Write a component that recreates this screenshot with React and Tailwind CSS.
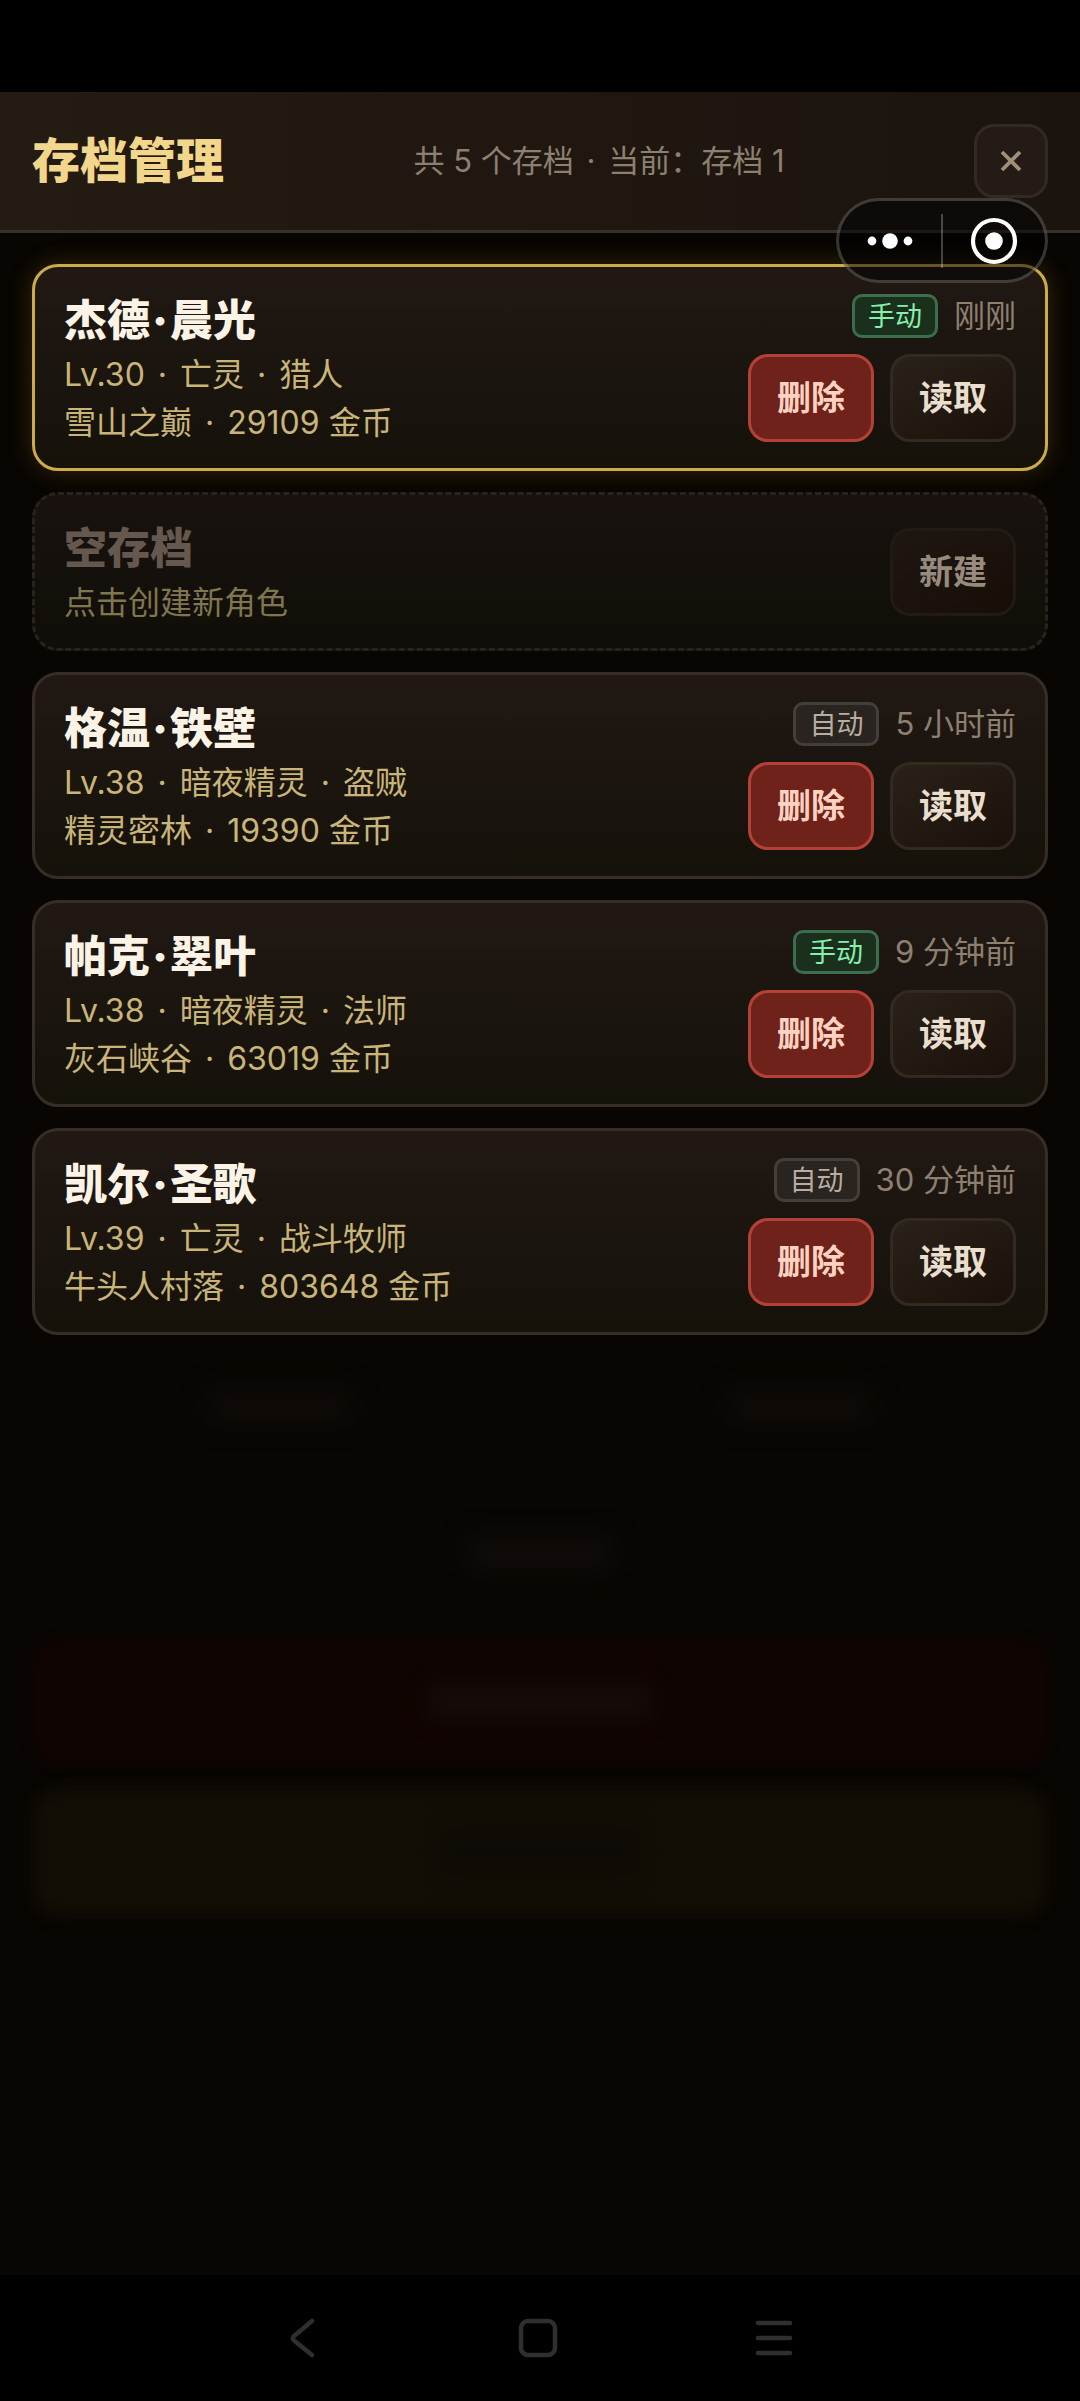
import React, { Fragment } from "react";

const saves = [
  { id: 1, name: "杰德·晨光", info: "Lv.30 · 亡灵 · 猎人", place: "雪山之巅 · 29109 金币", kind: "手动", time: "刚刚", current: true },
  { id: 2, empty: true, name: "空存档", info: "点击创建新角色" },
  { id: 3, name: "格温·铁壁", info: "Lv.38 · 暗夜精灵 · 盗贼", place: "精灵密林 · 19390 金币", kind: "自动", time: "5 小时前" },
  { id: 4, name: "帕克·翠叶", info: "Lv.38 · 暗夜精灵 · 法师", place: "灰石峡谷 · 63019 金币", kind: "手动", time: "9 分钟前" },
  { id: 5, name: "凯尔·圣歌", info: "Lv.39 · 亡灵 · 战斗牧师", place: "牛头人村落 · 803648 金币", kind: "自动", time: "30 分钟前" },
];

const cardBase = "flex items-center justify-between rounded-[26px] border-3 bg-linear-to-b px-[29px] pt-[22px] pb-[21px]";
const buttonBase = "h-[88px] w-[126px] rounded-[20px] border-3 text-[34px] font-bold leading-none";
const nameBase = "text-[43px] font-black leading-[62px]";
const metaBase = "text-[32px] leading-[48px]";

/* Sets each middle dot with a little room on both sides. */
function Dotted({ text, room = "mx-1" }) {
  return text.split("·").map((part, i) => (
    <Fragment key={i}>
      {i > 0 && <span className={room}>·</span>}
      {part}
    </Fragment>
  ));
}

function Badge({ kind }) {
  const tone =
    kind === "手动"
      ? "border-[#3a6e4d] bg-[#1b2f1d] text-[#86efac]"
      : "border-[#443e3a] bg-[#292420] text-[#b8ada0]";
  return (
    <span className={`flex h-11 items-center rounded-[10px] border-3 px-[13px] text-[27px] leading-none ${tone}`}>
      {kind}
    </span>
  );
}

function EmptyCard({ save }) {
  return (
    <li className={`${cardBase} border-dashed border-[#28231d] from-[#19120e] to-[#100e08]`}>
      <div>
        <h2 className={`${nameBase} text-[#65584e]`}>{save.name}</h2>
        <p className={`${metaBase} text-[#7f7650]`}>{save.info}</p>
      </div>
      <button type="button" className={`${buttonBase} border-[#221a14] bg-linear-to-br from-[#1f1612] to-[#160e07] text-[#978b7e]`}>
        新建
      </button>
    </li>
  );
}

function SaveCard({ save }) {
  const frame = save.current
    ? "border-[#cdab49] shadow-[0_0_26px_rgba(212,175,55,0.22)]"
    : "border-[#352d26]";
  return (
    <li className={`${cardBase} from-[#211813] to-[#15120a] ${frame}`}>
      <div>
        <h2 className={`${nameBase} text-[#fbf3e6]`}>
          <Dotted text={save.name} room="mx-0.5" />
        </h2>
        <p className={`${metaBase} text-[#c9b579]`}>
          <Dotted text={save.info} />
        </p>
        <p className={`${metaBase} text-[#c9b579]`}>
          <Dotted text={save.place} />
        </p>
      </div>
      <div className="flex flex-col items-end gap-4">
        <div className="flex items-center gap-4">
          <Badge kind={save.kind} />
          <time className="text-[31px] leading-[44px] text-[#8d8070]">{save.time}</time>
        </div>
        <div className="flex gap-4">
          <button type="button" className={`${buttonBase} border-[#b34138] bg-[#6f221a] text-[#ffd2c2]`}>
            删除
          </button>
          <button type="button" className={`${buttonBase} border-[#322921] bg-linear-to-br from-[#2a2119] to-[#1a120a] text-[#eadfcf]`}>
            读取
          </button>
        </div>
      </div>
    </li>
  );
}

/* Dimmed, blurred menu that lies behind the panel. */
function Backdrop() {
  return (
    <div aria-hidden="true" className="absolute inset-x-0 bottom-0 flex h-[931px] flex-col gap-6 px-8">
      <div className="grid grid-cols-2 gap-6">
        <div className="flex h-[124px] items-center justify-center">
          <div className="h-9 w-36 bg-[#0f0b08] blur-[12px]" />
        </div>
        <div className="flex h-[124px] items-center justify-center">
          <div className="h-9 w-36 bg-[#0f0b08] blur-[12px]" />
        </div>
      </div>
      <div className="flex h-[124px] items-center justify-center">
        <div className="h-9 w-36 bg-[#100c09] blur-[12px]" />
      </div>
      <div className="flex h-[124px] items-center justify-center rounded-[26px] bg-[#100402] blur-[6px]">
        <div className="h-9 w-56 bg-[#160b09] blur-[10px]" />
      </div>
      <div className="flex h-[128px] items-center justify-center rounded-[26px] bg-[#120e05] blur-[8px]">
        <div className="h-9 w-48 bg-[#0e0a05] blur-[10px]" />
      </div>
    </div>
  );
}

function Capsule() {
  return (
    <div className="absolute right-8 top-[198px] z-10 flex h-[85px] w-[212px] items-center rounded-full border-3 border-white/20 bg-black/50">
      <button type="button" aria-label="更多" className="flex h-full flex-1 items-center justify-center">
        <svg width="46" height="18" viewBox="0 0 46 18" fill="#fff">
          <circle cx="5" cy="9" r="4.4" />
          <circle cx="23" cy="9" r="7.8" />
          <circle cx="41" cy="9" r="4.4" />
        </svg>
      </button>
      <span className="h-[54px] w-0.5 bg-white/25" />
      <button type="button" aria-label="关闭小程序" className="flex h-full flex-1 items-center justify-center">
        <svg width="48" height="48" viewBox="0 0 48 48">
          <circle cx="24" cy="24" r="21" fill="none" stroke="#fff" strokeWidth="4.2" />
          <circle cx="24" cy="24" r="8.8" fill="#fff" />
        </svg>
      </button>
    </div>
  );
}

function NavBar() {
  const icon = { width: 40, height: 40, viewBox: "0 0 40 40", fill: "none", stroke: "#2f2f2f", strokeWidth: 4.5, strokeLinecap: "round", strokeLinejoin: "round" };
  return (
    <nav className="flex h-[126px] items-center justify-center gap-[196px] bg-black pr-1">
      <button type="button" aria-label="返回">
        <svg {...icon}>
          <path d="M30 3L12 18Q9.500 20 12 22.500L30 37" />
        </svg>
      </button>
      <button type="button" aria-label="主屏幕">
        <svg {...icon}>
          <rect x="3" y="3" width="34" height="34" rx="7" />
        </svg>
      </button>
      <button type="button" aria-label="最近任务">
        <svg {...icon}>
          <path d="M4 5H36M4 20H36M4 35H36" />
        </svg>
      </button>
    </nav>
  );
}

export default function App() {
  return (
    <div className="relative flex min-h-screen flex-col bg-black font-['Inter','Noto_Sans_CJK_SC',sans-serif]">
      <div className="h-[92px]" />
      <header className="flex items-center justify-between border-b-3 border-[#36302a] bg-linear-to-r from-[#241b12] to-[#1b130e] px-8 py-8">
        <h1 className="text-[48px] font-black leading-[74px] text-[#f2d68b]">存档管理</h1>
        <p className="text-[31px] leading-[44px] text-[#8d8070]">
          <Dotted text="共 5 个存档 · 当前：存档 1" />
        </p>
        <button type="button" aria-label="关闭" className="flex size-[74px] items-center justify-center rounded-[20px] border-3 border-[#322922] bg-[#241b16]">
          <svg width="24" height="24" viewBox="0 0 24 24" stroke="#a09079" strokeWidth="3.8">
            <path d="M3 3L21 21M21 3L3 21" />
          </svg>
        </button>
      </header>
      <Capsule />
      <main className="relative flex-1 bg-[#080502]">
        <Backdrop />
        <ul className="relative flex flex-col gap-[21px] px-8 pt-[31px]">
          {saves.map((save) =>
            save.empty ? <EmptyCard key={save.id} save={save} /> : <SaveCard key={save.id} save={save} />
          )}
        </ul>
      </main>
      <NavBar />
    </div>
  );
}
